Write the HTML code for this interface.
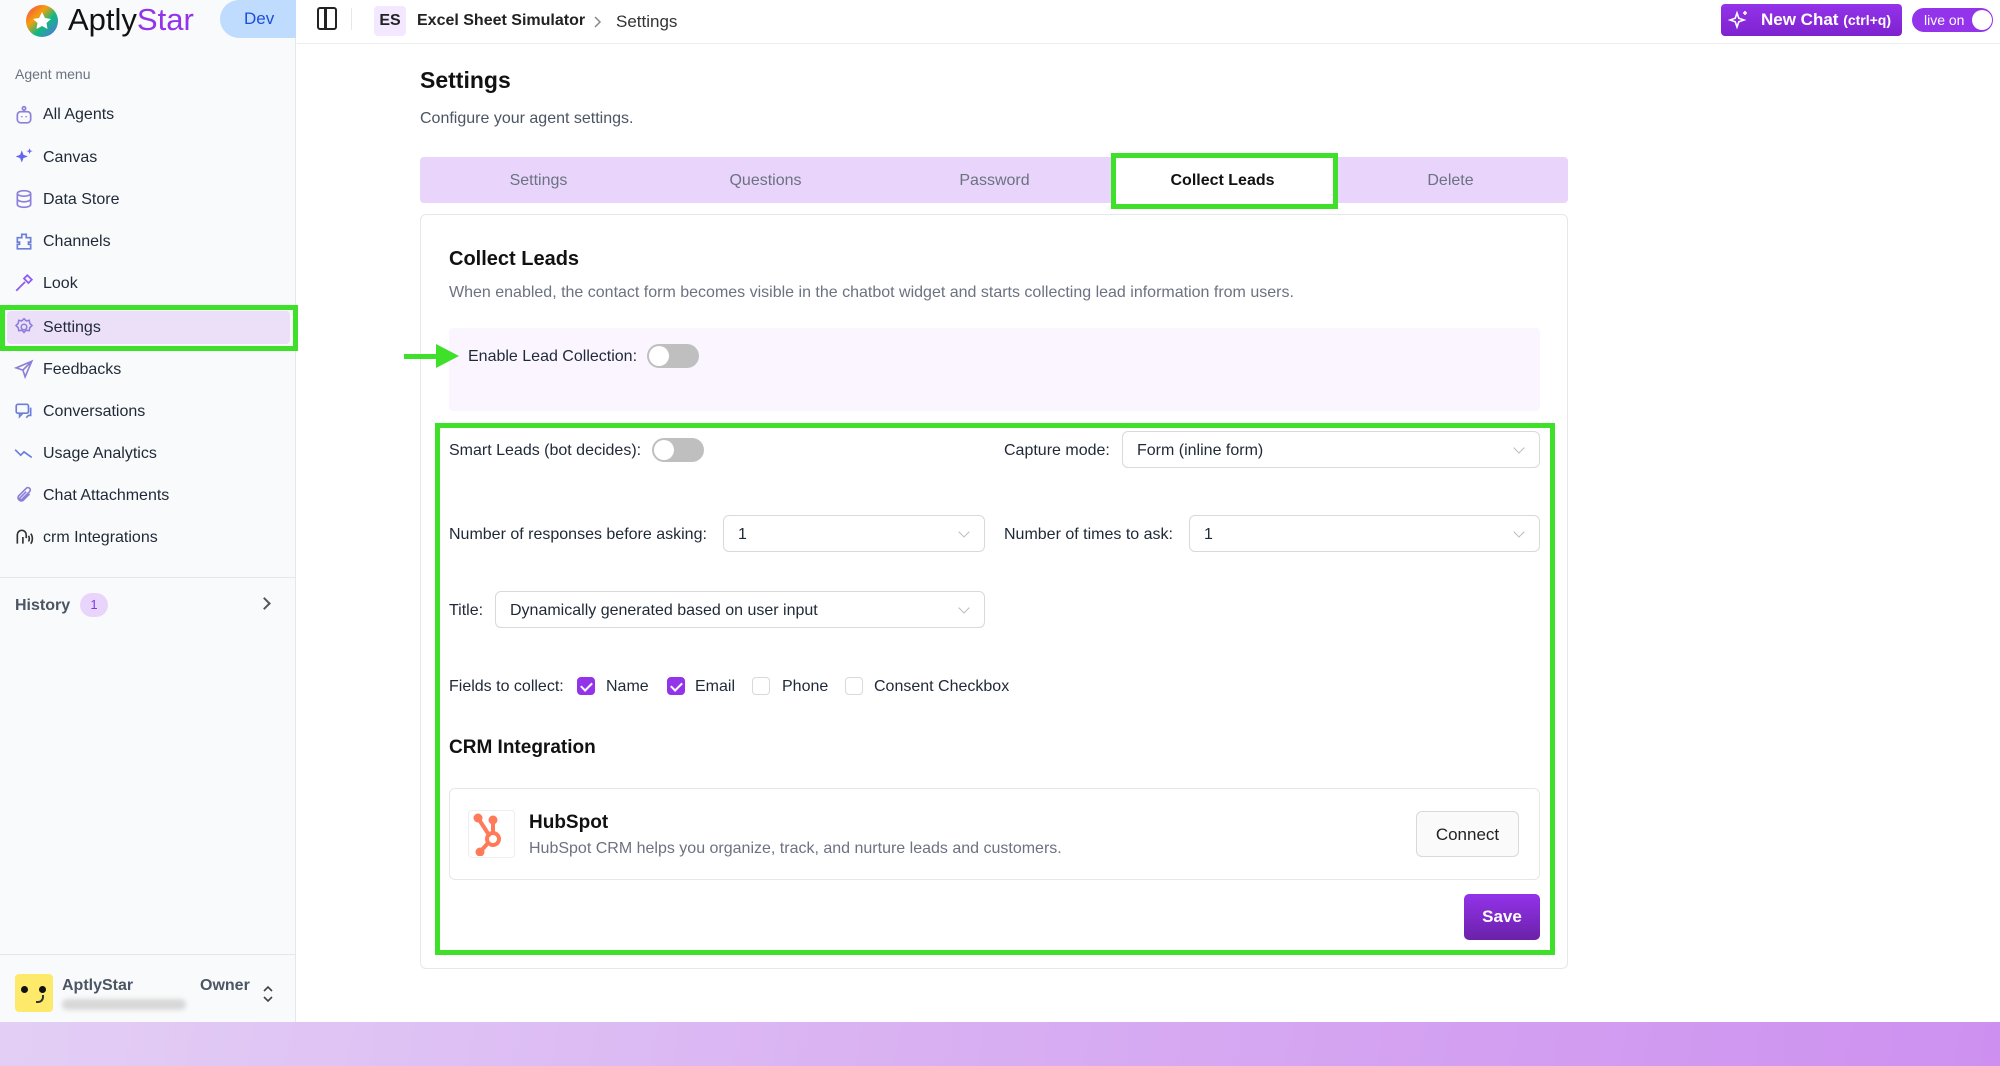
<!DOCTYPE html>
<html><head><meta charset="utf-8"><style>
*{box-sizing:border-box;margin:0;padding:0}
body{width:2000px;height:1066px;position:relative;overflow:hidden;background:#fff;font-family:"Liberation Sans",sans-serif;color:#1f2937}
.a{position:absolute;white-space:nowrap}
.side{position:absolute;left:0;top:0;width:296px;height:1022px;background:#f9fafb;border-right:1px solid #e5e7eb}
.mi{position:absolute;left:43px;font-size:16px;color:#1f2937}
.ic{position:absolute;left:14px;width:20px;height:20px}
.lbl{font-size:16px;color:#1f2937}
.sel{position:absolute;height:37px;border:1px solid #d9d9d9;border-radius:6px;background:#fff;font-size:16px;padding:10px 14px;color:#1f2937}
.sel:after{content:"";position:absolute;right:16px;top:12px;width:7px;height:7px;border-right:1.3px solid #bbb;border-bottom:1.3px solid #bbb;transform:rotate(45deg)}
.tog{position:absolute;width:52px;height:24px;border-radius:12px;background:#bfbfbf}
.tog:after{content:"";position:absolute;left:2px;top:2px;width:20px;height:20px;border-radius:50%;background:#fff}
.cb{position:absolute;width:18px;height:18px;border-radius:4px;border:1px solid #d9d9d9;background:#fff}
.cb.on{background:#9333ea;border-color:#9333ea}
.cb.on:after{content:"";position:absolute;left:5px;top:2px;width:5px;height:9px;border-right:2px solid #fff;border-bottom:2px solid #fff;transform:rotate(45deg)}
.tab{position:absolute;top:158px;height:46px;width:229px;text-align:center;line-height:46px;font-size:16px;color:#6b7280}
</style></head><body>

<div class="side">
  <svg class="a" style="left:24px;top:4px" width="36" height="34" viewBox="0 0 36 34"><defs><linearGradient id="lg" x1="0" y1="0" x2="1" y2="1"><stop offset="0" stop-color="#f43f5e"/><stop offset=".35" stop-color="#f59e0b"/><stop offset=".6" stop-color="#10b981"/><stop offset="1" stop-color="#6366f1"/></linearGradient></defs><circle cx="18" cy="17" r="16" fill="url(#lg)"/><path d="M18 8l3 6 6 1-4.5 4 1 6-5.5-3-5.5 3 1-6L9 15l6-1z" fill="#fff"/></svg>
  <div class="a" style="left:68px;top:2px;font-size:31px;color:#111">Aptly<span style="color:#9333ea">Star</span></div>
  <div class="a" style="left:220px;top:0;width:76px;height:38px;background:#bfdbfe;border-radius:19px 0 0 19px;color:#1d4ed8;font-size:17px;line-height:38px;padding-left:24px">Dev</div>
  <div class="a" style="left:15px;top:66px;font-size:14px;color:#6b7280">Agent menu</div>

  <svg class="ic" style="top:105px" viewBox="0 0 18 18" fill="none" stroke="#8b7fd8" stroke-width="1.5"><rect x="3" y="6" width="12" height="10" rx="3"/><circle cx="9" cy="3" r="1.5"/><path d="M9 4.5V6M7 10v1M11 10v1"/></svg>
  <div class="mi" style="top:106px">All Agents</div>
  <svg class="ic" style="top:147px" viewBox="0 0 18 18" fill="#6366f1"><path d="M7 3l1.5 4 4 1.5-4 1.5L7 14l-1.5-4-4-1.5 4-1.5z"/><path d="M14 1l.7 2 2 .7-2 .7-.7 2-.7-2-2-.7 2-.7z"/></svg>
  <div class="mi" style="top:149px">Canvas</div>
  <svg class="ic" style="top:189px" viewBox="0 0 18 18" fill="none" stroke="#8b7fd8" stroke-width="1.5"><ellipse cx="9" cy="4" rx="6" ry="2.5"/><path d="M3 4v10c0 1.4 2.7 2.5 6 2.5s6-1.1 6-2.5V4M3 9c0 1.4 2.7 2.5 6 2.5S15 10.4 15 9"/></svg>
  <div class="mi" style="top:191px">Data Store</div>
  <svg class="ic" style="top:231px" viewBox="0 0 18 18" fill="none" stroke="#6b7fd8" stroke-width="1.5"><path d="M3 6h4V3h4v3h4v4h-2v2h2v4H3v-4h2v-2H3z"/></svg>
  <div class="mi" style="top:233px">Channels</div>
  <svg class="ic" style="top:273px" viewBox="0 0 18 18" fill="none" stroke="#8b5cf6" stroke-width="1.6"><path d="M2 16l8-8M9 5l4 4M12 2l4 4-3 3-4-4z"/></svg>
  <div class="mi" style="top:275px">Look</div>

  <div class="a" style="left:0;top:305px;width:298px;height:46px;border:5px solid #3fe02a"></div>
  <div class="a" style="left:7px;top:311px;width:283px;height:33px;background:#ecdff8;border-radius:4px"></div>
  <svg class="ic" style="top:317px" viewBox="0 0 18 18" fill="none" stroke="#8b7fd8" stroke-width="1.4"><circle cx="9" cy="9" r="2.5"/><path d="M9 1.5l2 2 2.7-.5.5 2.7 2 2-2 2-.5 2.7-2.7-.5-2 2-2-2-2.7.5-.5-2.7-2-2 2-2 .5-2.7 2.7.5z"/></svg>
  <div class="mi" style="top:319px">Settings</div>

  <svg class="ic" style="top:359px" viewBox="0 0 18 18" fill="none" stroke="#8b7fd8" stroke-width="1.5"><path d="M16 2L2 8l6 2 2 6z M8 10l8-8"/></svg>
  <div class="mi" style="top:361px">Feedbacks</div>
  <svg class="ic" style="top:401px" viewBox="0 0 18 18" fill="none" stroke="#6b7fd8" stroke-width="1.5"><rect x="2" y="3" width="11" height="8" rx="1.5"/><path d="M5 11v3l3-3M15 6v7h-2l-2 2"/></svg>
  <div class="mi" style="top:403px">Conversations</div>
  <svg class="ic" style="top:443px" viewBox="0 0 18 18" fill="none" stroke="#6b7fd8" stroke-width="1.5"><path d="M1 6l5 5 3-3 7 5"/></svg>
  <div class="mi" style="top:445px">Usage Analytics</div>
  <svg class="ic" style="top:485px" viewBox="0 0 18 18" fill="none" stroke="#8b7fd8" stroke-width="1.5"><path d="M14 8l-6 6a3 3 0 01-4-4l7-7a2 2 0 013 3l-7 7a1 1 0 01-1.5-1.5L11 6"/></svg>
  <div class="mi" style="top:487px">Chat Attachments</div>
  <svg class="ic" style="top:527px" viewBox="0 0 18 18" fill="none" stroke="#333" stroke-width="1.5"><path d="M3 15V7a4 4 0 018 0v3M8 15V9M13 8c1 1 1 4 0 5M15 6c2 2 2 7 0 9"/></svg>
  <div class="mi" style="top:529px">crm Integrations</div>

  <div class="a" style="left:0;top:577px;width:296px;height:1px;background:#e5e7eb"></div>
  <div class="a" style="left:15px;top:597px;font-size:16px;color:#4b5563;font-weight:bold">History</div>
  <div class="a" style="left:80px;top:593px;width:28px;height:24px;border-radius:12px;background:#e9d5fb;color:#7c3aed;font-size:13px;text-align:center;line-height:24px">1</div>
  <div class="a" style="left:260px;top:599px;width:9px;height:9px;border-right:2px solid #555;border-top:2px solid #555;transform:rotate(45deg)"></div>

  <div class="a" style="left:0;top:954px;width:296px;height:1px;background:#e5e7eb"></div>
  <div class="a" style="left:15px;top:974px;width:38px;height:38px;border-radius:4px;background:#fde96a"></div>
  <div class="a" style="left:21px;top:986px;width:7px;height:7px;border-radius:50%;background:#111"></div>
  <div class="a" style="left:39px;top:986px;width:7px;height:7px;border-radius:50%;background:#111"></div>
  <div class="a" style="left:36px;top:995px;width:8px;height:8px;border-bottom:2px solid #333;border-right:2px solid #333;border-radius:0 0 6px 0"></div>
  <div class="a" style="left:62px;top:977px;font-size:16px;color:#4b5563;font-weight:bold">AptlyStar</div>
  <div class="a" style="left:62px;top:999px;width:124px;height:11px;border-radius:6px;background:#d8d8d8;filter:blur(2px)"></div>
  <div class="a" style="left:200px;top:977px;font-size:16px;color:#4b5563;font-weight:bold">Owner</div>
  <svg class="a" style="left:261px;top:984px" width="14" height="20" viewBox="0 0 14 20" fill="none" stroke="#444" stroke-width="1.6"><path d="M3 7l4-4 4 4M3 13l4 4 4-4"/></svg>
</div>

<div class="a" style="left:0;top:1022px;width:2000px;height:44px;background:linear-gradient(100deg,#e3cff5,#d8aef2 50%,#cd90f0)"></div>

<!-- top bar -->
<div class="a" style="left:297px;top:43px;width:1703px;height:1px;background:#eceef2"></div>
<div class="a" style="left:317px;top:7px;width:20px;height:23px;border:2.5px solid #222;border-radius:3px"></div>
<div class="a" style="left:324px;top:7px;width:2.5px;height:23px;background:#222"></div>
<div class="a" style="left:351px;top:8px;width:1px;height:22px;background:#e5e7eb"></div>
<div class="a" style="left:374px;top:6px;width:32px;height:30px;background:#f3e8ff;border-radius:4px;font-size:16px;font-weight:bold;text-align:center;line-height:30px;color:#222">ES</div>
<div class="a" style="left:417px;top:12px;font-size:16px;font-weight:bold;color:#222">Excel Sheet Simulator</div>
<svg class="a" style="left:592px;top:15px" width="10" height="14" viewBox="0 0 10 14" fill="none" stroke="#888" stroke-width="1.5"><path d="M3 2l5 5-5 5"/></svg>
<div class="a" style="left:616px;top:12px;font-size:17px;color:#333">Settings</div>
<div class="a" style="left:1721px;top:4px;width:181px;height:32px;border-radius:4px;background:linear-gradient(#9333ea,#7e22ce);color:#fff;font-size:17px;font-weight:bold;line-height:32px;padding-left:40px">New Chat <span style="font-size:14px">(ctrl+q)</span></div>
<svg class="a" style="left:1728px;top:9px" width="22" height="22" viewBox="0 0 22 22" fill="none" stroke="#fff" stroke-width="1.6"><path d="M9 4l1.8 5.2L16 11l-5.2 1.8L9 18l-1.8-5.2L2 11l5.2-1.8z"/><path d="M17 2v4M15 4h4"/></svg>
<div class="a" style="left:1912px;top:8px;width:81px;height:24px;border-radius:12px;background:#9333ea;color:#fff;font-size:14px;line-height:24px;padding-left:12px">live on</div>
<div class="a" style="left:1972px;top:10px;width:20px;height:20px;border-radius:50%;background:#fff"></div>

<!-- main -->
<div class="a" style="left:420px;top:67px;font-size:23px;font-weight:bold;color:#111">Settings</div>
<div class="a" style="left:420px;top:110px;font-size:16px;color:#4b5563">Configure your agent settings.</div>
<div class="a" style="left:420px;top:157px;width:1148px;height:46px;background:#e9d5fb;border-radius:4px"></div>
<div class="tab" style="left:424px">Settings</div>
<div class="tab" style="left:651px">Questions</div>
<div class="tab" style="left:880px">Password</div>
<div class="a" style="left:1115px;top:158px;width:219px;height:47px;background:#fff"></div>
<div class="tab" style="left:1108px;color:#111;font-weight:bold">Collect Leads</div>
<div class="a" style="left:1111px;top:153px;width:227px;height:56px;border:5px solid #3fe02a"></div>
<div class="tab" style="left:1336px">Delete</div>

<div class="a" style="left:420px;top:214px;width:1148px;height:755px;border:1px solid #e5e7eb;border-radius:6px"></div>
<div class="a" style="left:449px;top:248px;font-size:20px;font-weight:bold;color:#111">Collect Leads</div>
<div class="a" style="left:449px;top:284px;font-size:16px;color:#6b7280">When enabled, the contact form becomes visible in the chatbot widget and starts collecting lead information from users.</div>
<div class="a" style="left:449px;top:328px;width:1091px;height:83px;background:#faf5ff;border-radius:4px"></div>
<div class="a" style="left:404px;top:354px;width:36px;height:5px;background:#3fe02a"></div>
<div class="a" style="left:436px;top:344px;width:0;height:0;border-left:23px solid #3fe02a;border-top:12px solid transparent;border-bottom:12px solid transparent"></div>
<div class="a lbl" style="left:468px;top:348px">Enable Lead Collection:</div>
<div class="tog" style="left:647px;top:344px"></div>

<div class="a" style="left:435px;top:423px;width:1120px;height:532px;border:5px solid #3fe02a"></div>
<div class="a lbl" style="left:449px;top:442px">Smart Leads (bot decides):</div>
<div class="tog" style="left:652px;top:438px"></div>
<div class="a lbl" style="left:1004px;top:442px">Capture mode:</div>
<div class="sel" style="left:1122px;top:431px;width:418px">Form (inline form)</div>

<div class="a lbl" style="left:449px;top:526px">Number of responses before asking:</div>
<div class="sel" style="left:723px;top:515px;width:262px">1</div>
<div class="a lbl" style="left:1004px;top:526px">Number of times to ask:</div>
<div class="sel" style="left:1189px;top:515px;width:351px">1</div>

<div class="a lbl" style="left:449px;top:602px">Title:</div>
<div class="sel" style="left:495px;top:591px;width:490px">Dynamically generated based on user input</div>

<div class="a lbl" style="left:449px;top:678px">Fields to collect:</div>
<div class="cb on" style="left:577px;top:677px"></div><div class="a lbl" style="left:606px;top:678px">Name</div>
<div class="cb on" style="left:667px;top:677px"></div><div class="a lbl" style="left:695px;top:678px">Email</div>
<div class="cb" style="left:752px;top:677px"></div><div class="a lbl" style="left:782px;top:678px">Phone</div>
<div class="cb" style="left:845px;top:677px"></div><div class="a lbl" style="left:874px;top:678px">Consent Checkbox</div>

<div class="a" style="left:449px;top:737px;font-size:19px;font-weight:bold;color:#111">CRM Integration</div>
<div class="a" style="left:449px;top:788px;width:1091px;height:92px;border:1px solid #e5e7eb;border-radius:6px"></div>
<div class="a" style="left:468px;top:810px;width:47px;height:48px;border:1px solid #eee;border-radius:4px"></div>
<svg class="a" style="left:472px;top:812px" width="40" height="44" viewBox="0 0 40 44" fill="none" stroke="#ff7a59" stroke-width="4" stroke-linecap="round"><circle cx="21" cy="27" r="6"/><path d="M6 6l11 17M21 21V10M16 31l-8 9"/><circle cx="6" cy="6" r="2.5" fill="#ff7a59"/><circle cx="21" cy="8" r="2.5" fill="#ff7a59"/><circle cx="8" cy="40" r="2.5" fill="#ff7a59"/></svg>
<div class="a" style="left:529px;top:812px;font-size:19px;font-weight:bold;color:#111">HubSpot</div>
<div class="a" style="left:529px;top:840px;font-size:16px;color:#6b7280">HubSpot CRM helps you organize, track, and nurture leads and customers.</div>
<div class="a" style="left:1416px;top:811px;width:103px;height:46px;border:1px solid #d9d9d9;border-radius:6px;background:#fafafa;text-align:center;line-height:45px;font-size:17px;color:#222">Connect</div>
<div class="a" style="left:1464px;top:894px;width:76px;height:46px;border-radius:5px;background:linear-gradient(#9333ea,#6b21a8);color:#fff;font-size:17px;font-weight:bold;text-align:center;line-height:46px">Save</div>
</body></html>
